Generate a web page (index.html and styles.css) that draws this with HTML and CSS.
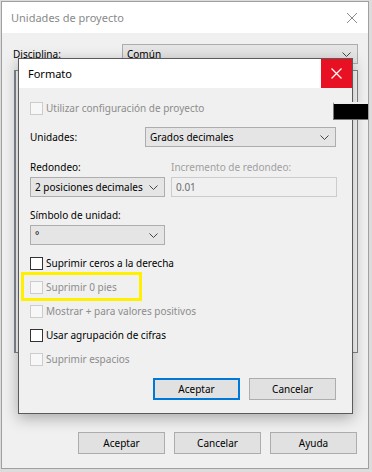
FILE: index.html
```html
<!DOCTYPE html>
<html lang="es">
<head>
    <meta charset="UTF-8">
    <title>Unidades de proyecto</title>
    <link rel="stylesheet" href="styles.css">
</head>
<body>
    <div class="window">
        <div class="titlebar">
            <span class="title">Unidades de proyecto</span>
            <svg class="x-icon" width="12" height="12" viewBox="0 0 12 12"><path d="M1 1L11 11M11 1L1 11" stroke="#8a8a8a" stroke-width="1"/></svg>
        </div>
        <div class="body">
            <div class="field-row">
                <span class="field-label">Disciplina:</span>
                <div class="select grow">Común
                    <svg class="chev" width="9" height="5" viewBox="0 0 9 5"><path d="M0.5 0.5L4.5 4.5L8.5 0.5" fill="none" stroke="#444"/></svg>
                </div>
            </div>
            <div class="list"></div>
            <div class="buttons">
                <button class="btn">Aceptar</button>
                <button class="btn">Cancelar</button>
                <button class="btn">Ayuda</button>
            </div>
        </div>

        <div class="dialog">
            <div class="dialog-title">
                <span>Formato</span>
                <div class="close-red">
                    <svg width="11" height="11" viewBox="0 0 11 11"><path d="M0.5 0.5L10.5 10.5M10.5 0.5L0.5 10.5" stroke="#fff" stroke-width="1.2"/></svg>
                </div>
            </div>
            <div class="dialog-body">
                <div class="check disabled first"><span class="box"></span>Utilizar configuración de proyecto</div>

                <div class="units-row">
                    <span class="units-label">Unidades:</span>
                    <div class="select grow">Grados decimales
                        <svg class="chev" width="9" height="5" viewBox="0 0 9 5"><path d="M0.5 0.5L4.5 4.5L8.5 0.5" fill="none" stroke="#444"/></svg>
                    </div>
                </div>

                <div class="round-grid">
                    <span class="lbl">Redondeo:</span>
                    <span class="lbl muted">Incremento de redondeo:</span>
                    <div class="select">2 posiciones decimales
                        <svg class="chev" width="9" height="5" viewBox="0 0 9 5"><path d="M0.5 0.5L4.5 4.5L8.5 0.5" fill="none" stroke="#444"/></svg>
                    </div>
                    <div class="textbox">0.01</div>
                </div>

                <div class="symbol">
                    <span class="lbl">Símbolo de unidad:</span>
                    <div class="select narrow">°
                        <svg class="chev" width="9" height="5" viewBox="0 0 9 5"><path d="M0.5 0.5L4.5 4.5L8.5 0.5" fill="none" stroke="#444"/></svg>
                    </div>
                </div>

                <div class="checks">
                    <div class="check"><span class="box"></span>Suprimir ceros a la derecha</div>
                    <div class="check disabled"><span class="box"></span>Suprimir 0 pies<span class="highlight"></span></div>
                    <div class="check disabled"><span class="box"></span>Mostrar + para valores positivos</div>
                    <div class="check"><span class="box"></span>Usar agrupación de cifras</div>
                    <div class="check disabled"><span class="box"></span>Suprimir espacios</div>
                </div>

                <div class="dialog-buttons">
                    <button class="btn default">Aceptar</button>
                    <button class="btn">Cancelar</button>
                </div>
            </div>
        </div>

        <div class="redact"></div>
    </div>
</body>
</html>
```

FILE: styles.css
```css
body {
    margin: 0;
    background-color: #dcdcdc;
    font-family: "Noto Sans", sans-serif;
    font-size: 10px;
    color: #000;
}
.window {
    position: relative;
    margin: 1px 0 0 1px;
    width: 366px;
    height: 466px;
    border: 1px solid #a0a0a0;
    background-color: #f0f0f0;
    overflow: hidden;
}
.titlebar {
    height: 31px;
    background-color: #fff;
    display: flex;
    align-items: center;
    justify-content: space-between;
    padding: 0 10px 0 9px;
}
.title {
    color: #8a8a8a;
    font-size: 11px;
}
.body {
    padding: 11px 10px 0 11px;
}
.field-row {
    display: flex;
    align-items: center;
    height: 20px;
}
.field-label {
    width: 109px;
}
.select {
    position: relative;
    height: 20px;
    box-sizing: border-box;
    border: 1px solid #adadad;
    background-color: #e5e5e5;
    padding: 0 20px 0 4px;
    display: flex;
    align-items: center;
    white-space: nowrap;
}
.select.grow {
    flex: 1;
}
.chev {
    position: absolute;
    right: 6px;
    top: 7px;
}
.list {
    margin: 6px 0 0 1px;
    height: 283px;
    box-sizing: border-box;
    border: 1px solid #828790;
    border-left: 2px solid #828790;
    background-color: #fbfbfb;
}
.buttons {
    display: flex;
    justify-content: flex-end;
    gap: 9px;
    margin: 79px 1px 0 0;
}
.btn {
    width: 87px;
    height: 22px;
    box-sizing: border-box;
    border: 1px solid #adadad;
    background-color: #e1e1e1;
    font-family: "Noto Sans", sans-serif;
    font-size: 10px;
    color: #000;
    padding: 0;
}
.btn.default {
    border: 2px solid #0078d7;
}

/* Formato dialog on top */
.dialog {
    position: absolute;
    left: 16px;
    top: 56px;
    width: 335px;
    height: 356px;
    box-sizing: border-box;
    border: 1px solid #5a5a5a;
    background-color: #f0f0f0;
    box-shadow: 0 4px 14px rgba(0, 0, 0, 0.3);
}
.dialog-title {
    height: 29px;
    background-color: #fff;
    display: flex;
    align-items: center;
    justify-content: space-between;
    padding-left: 9px;
    font-size: 11px;
}
.close-red {
    width: 31px;
    height: 29px;
    background-color: #e81123;
    display: flex;
    align-items: center;
    justify-content: center;
}
.dialog-body {
    padding: 8px 16px 0 11px;
}
.check {
    display: flex;
    align-items: center;
    height: 24px;
    position: relative;
}
.box {
    width: 13px;
    height: 13px;
    box-sizing: border-box;
    border: 1px solid #333;
    background-color: #fff;
    margin-right: 3px;
}
.check.disabled {
    color: #8c8c8c;
}
.check.disabled .box {
    border-color: #cccccc;
    background-color: #f7f7f7;
}
.highlight {
    position: absolute;
    left: -9px;
    top: -3px;
    width: 121px;
    height: 29px;
    box-sizing: border-box;
    border: 3px solid #fff000;
}
.units-row {
    display: flex;
    align-items: center;
    margin-top: 7px;
}
.units-label {
    width: 115px;
}
.round-grid {
    display: grid;
    grid-template-columns: 135px 166px;
    column-gap: 6px;
    row-gap: 2px;
    margin-top: 12px;
}
.lbl {
    line-height: 16px;
}
.muted {
    color: #a0a0a0;
}
.textbox {
    height: 20px;
    box-sizing: border-box;
    border: 1px solid #cccccc;
    background-color: #f0f0f0;
    color: #6d6d6d;
    padding: 0 4px;
    display: flex;
    align-items: center;
}
.symbol {
    display: flex;
    flex-direction: column;
    gap: 2px;
    margin-top: 10px;
}
.select.narrow {
    width: 135px;
}
.checks {
    margin-top: 6px;
}
.dialog-buttons {
    display: flex;
    justify-content: flex-end;
    gap: 9px;
    margin-top: 7px;
}
.redact {
    position: absolute;
    left: 331px;
    top: 100px;
    width: 37px;
    height: 18px;
    box-sizing: border-box;
    background-color: #000;
    border: 1px solid #777;
    border-top: 2px solid #eee;
}
```
